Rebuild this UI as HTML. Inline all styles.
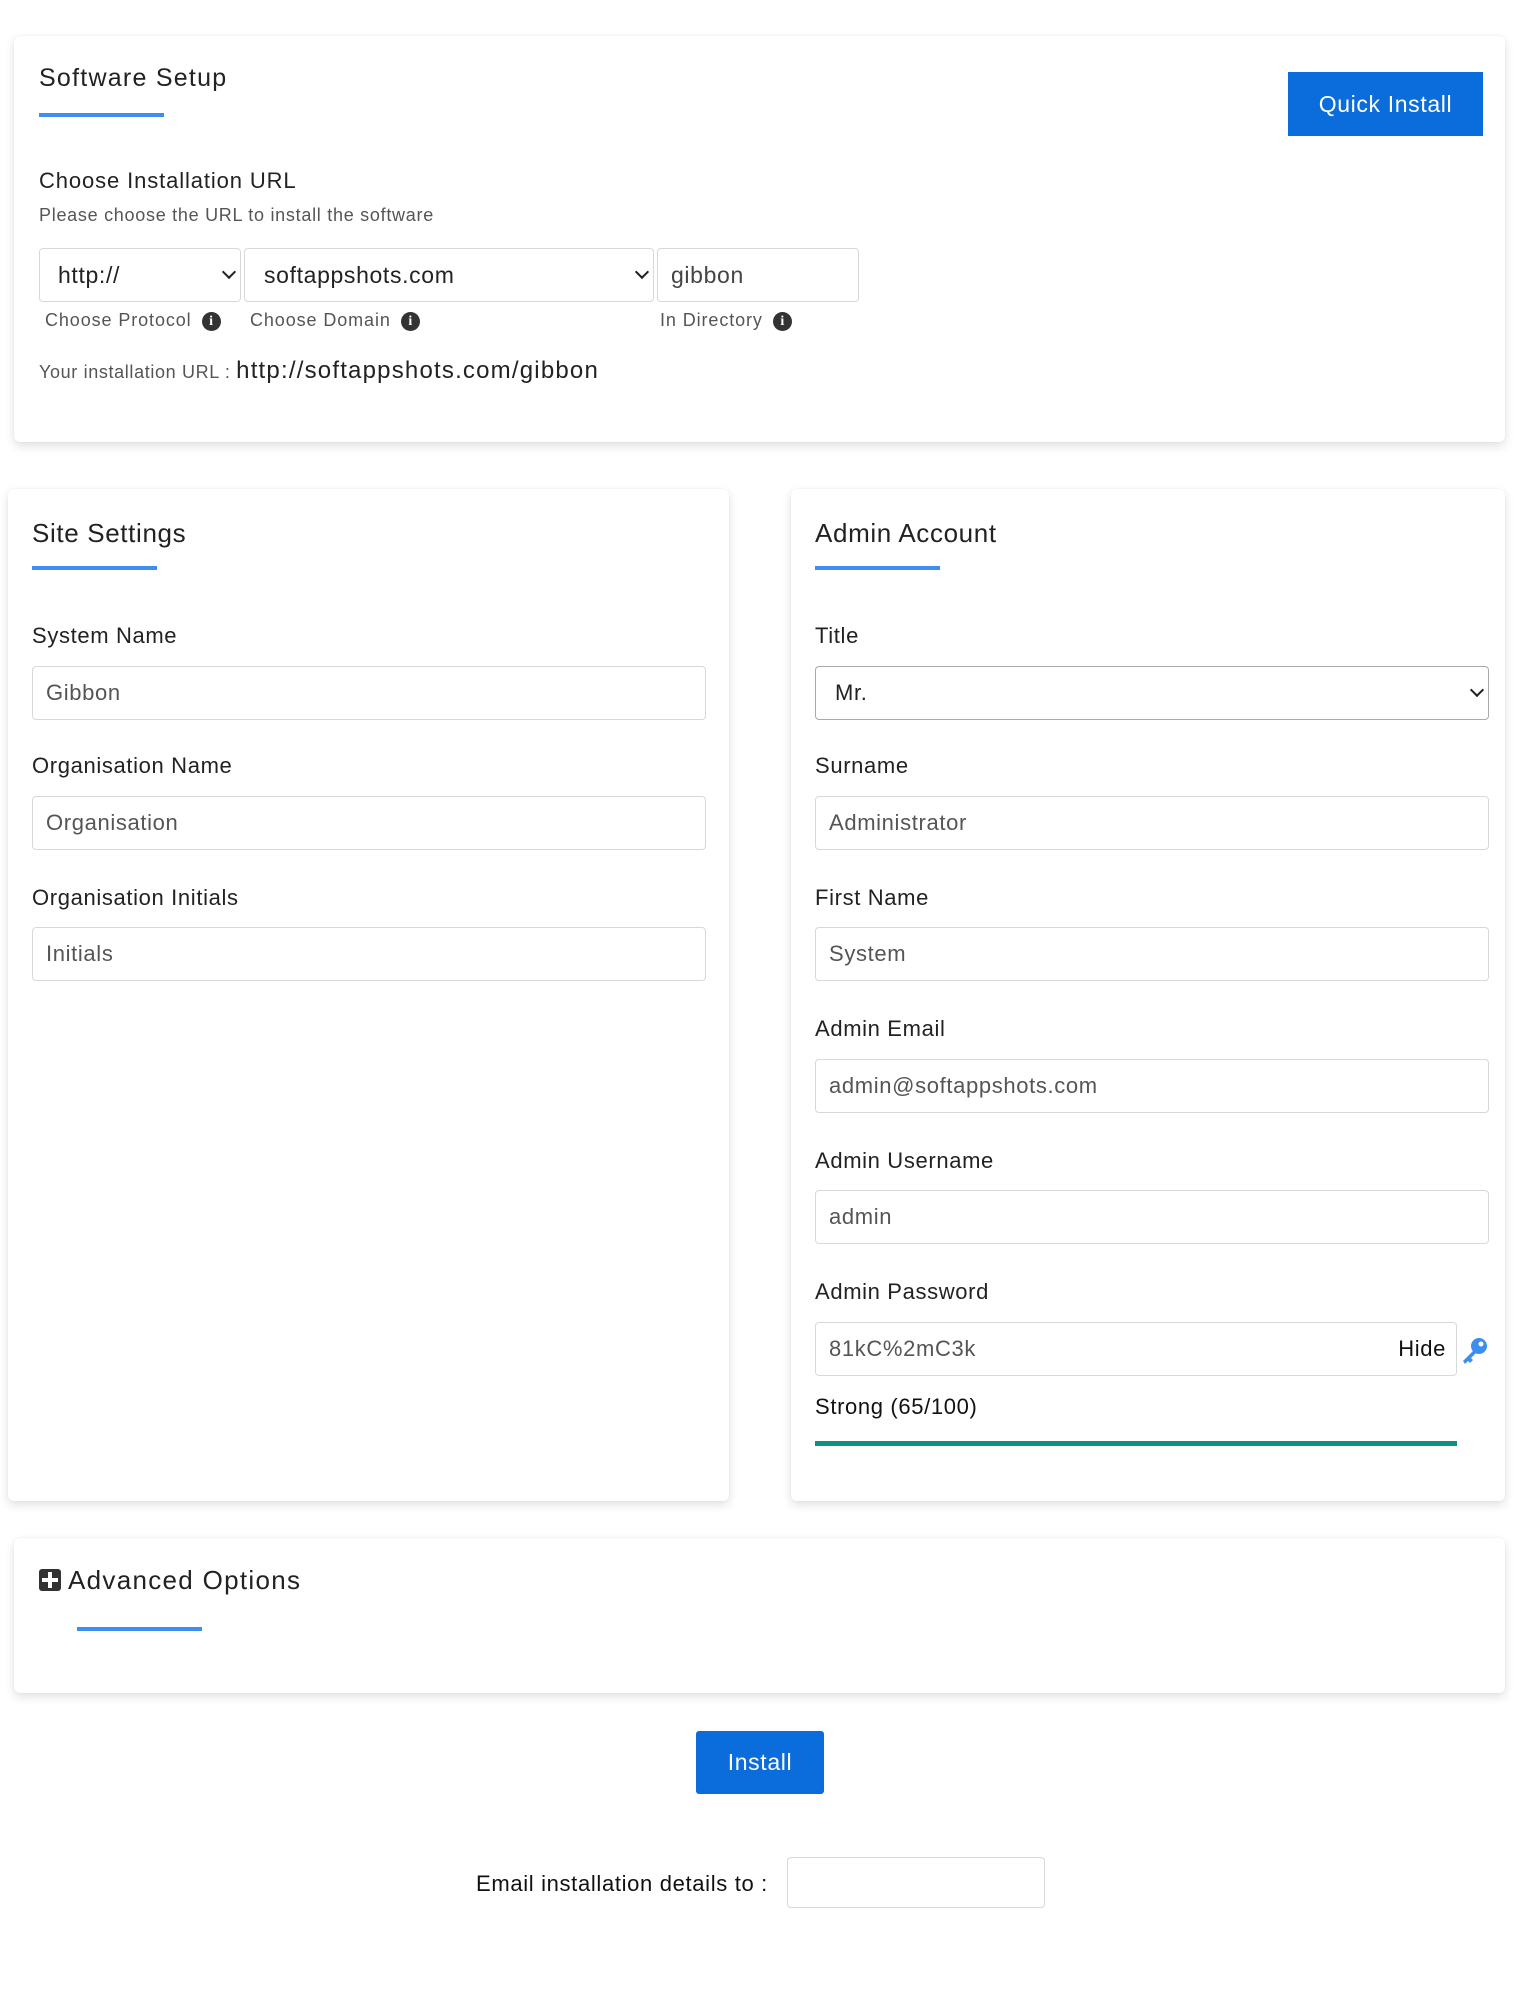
<!DOCTYPE html>
<html><head><meta charset="utf-8"><style>
*{box-sizing:border-box;margin:0;padding:0}
body{width:1522px;height:2000px;background:#fff;font-family:"Liberation Sans",sans-serif;color:#222;position:relative;overflow:hidden;letter-spacing:0.04em}
.a{position:absolute;white-space:nowrap}
.card{position:absolute;background:#fff;border-radius:6px;box-shadow:0 4px 10px rgba(0,0,0,.12),0 0 2px rgba(0,0,0,.06)}
.ul{position:absolute;height:4px;background:#3d8ef0;width:125px}
.inp{position:absolute;border:1.5px solid #d8d8d8;border-radius:4px;background:#fff;font-size:22px;color:#555;padding-left:13px;display:flex;align-items:center}
.lbl{position:absolute;font-size:22px;color:#222;white-space:nowrap}
.h{position:absolute;font-size:26px;color:#222;white-space:nowrap}
.chev{position:absolute;right:6px;top:50%;width:10px;height:10px;margin-top:-8px;border-right:2.5px solid #222;border-bottom:2.5px solid #222;transform:rotate(45deg)}
.info{display:inline-block;width:19px;height:19px;border-radius:50%;background:#333;color:#fff;font-size:14px;font-weight:bold;text-align:center;line-height:19px;font-family:"Liberation Serif",serif;vertical-align:middle;margin-left:10px;letter-spacing:0}
.sm{font-size:18px;color:#555}
</style></head><body>

<div class="card" style="left:14px;top:36px;width:1491px;height:406px"></div>
<div class="h" style="left:39px;top:64px;font-size:25px;letter-spacing:0.05em">Software Setup</div>
<div class="ul" style="left:39px;top:113px"></div>
<div class="a" style="left:1288px;top:72px;width:195px;height:64px;background:#0a6ddb;color:#fff;font-size:23px;display:flex;align-items:center;justify-content:center">Quick Install</div>
<div class="a" style="left:39px;top:168px;font-size:22px;letter-spacing:0.04em">Choose Installation URL</div>
<div class="a sm" style="left:39px;top:205px;letter-spacing:0.04em">Please choose the URL to install the software</div>
<div class="inp" style="left:39px;top:248px;width:202px;height:54px;padding-left:18px;font-size:23px;color:#222">http://<span class="chev"></span></div>
<div class="inp" style="left:244px;top:248px;width:410px;height:54px;padding-left:19px;font-size:23px;color:#222">softappshots.com<span class="chev"></span></div>
<div class="inp" style="left:657px;top:248px;width:202px;height:54px;font-size:23px;color:#444">gibbon</div>
<div class="a sm" style="left:45px;top:310px;letter-spacing:0.05em">Choose Protocol<span class="info">i</span></div>
<div class="a sm" style="left:250px;top:310px;letter-spacing:0.05em">Choose Domain<span class="info">i</span></div>
<div class="a sm" style="left:660px;top:310px;letter-spacing:0.05em">In Directory<span class="info">i</span></div>
<div class="a" style="left:39px;top:357px"><span class="sm">Your installation URL : </span><span style="font-size:24px;color:#222;letter-spacing:0.05em">http://softappshots.com/gibbon</span></div>

<div class="card" style="left:8px;top:489px;width:721px;height:1012px"></div>
<div class="card" style="left:791px;top:489px;width:714px;height:1012px"></div>

<div class="h" style="left:32px;top:518px">Site Settings</div>
<div class="ul" style="left:32px;top:566px"></div>
<div class="lbl" style="left:32px;top:623px">System Name</div>
<div class="inp" style="left:32px;top:666px;width:674px;height:54px">Gibbon</div>
<div class="lbl" style="left:32px;top:753px">Organisation Name</div>
<div class="inp" style="left:32px;top:796px;width:674px;height:54px">Organisation</div>
<div class="lbl" style="left:32px;top:885px">Organisation Initials</div>
<div class="inp" style="left:32px;top:927px;width:674px;height:54px">Initials</div>

<div class="h" style="left:815px;top:518px">Admin Account</div>
<div class="ul" style="left:815px;top:566px"></div>
<div class="lbl" style="left:815px;top:623px">Title</div>
<div class="inp" style="left:815px;top:666px;width:674px;height:54px;border-color:#aaa;color:#222;padding-left:19px">Mr.<span class="chev"></span></div>
<div class="lbl" style="left:815px;top:753px">Surname</div>
<div class="inp" style="left:815px;top:796px;width:674px;height:54px">Administrator</div>
<div class="lbl" style="left:815px;top:885px">First Name</div>
<div class="inp" style="left:815px;top:927px;width:674px;height:54px">System</div>
<div class="lbl" style="left:815px;top:1016px">Admin Email</div>
<div class="inp" style="left:815px;top:1059px;width:674px;height:54px">admin@softappshots.com</div>
<div class="lbl" style="left:815px;top:1148px">Admin Username</div>
<div class="inp" style="left:815px;top:1190px;width:674px;height:54px">admin</div>
<div class="lbl" style="left:815px;top:1279px">Admin Password</div>
<div class="inp" style="left:815px;top:1322px;width:642px;height:54px">81kC%2mC3k<span style="position:absolute;right:10px;color:#111">Hide</span></div>
<svg class="a" style="left:1460px;top:1336px" width="30" height="30" viewBox="0 0 30 30"><circle cx="19" cy="10" r="8" fill="#3d8ef0"/><circle cx="21" cy="8" r="2.5" fill="#fff"/><path d="M14 14 L3 25 L5 28 L8 25 L10 27 L13 24 L11 22 L17 16Z" fill="#3d8ef0"/></svg>
<div class="lbl" style="left:815px;top:1394px;color:#111">Strong (65/100)</div>
<div class="a" style="left:815px;top:1441px;width:642px;height:5px;background:#0f917f"></div>

<div class="card" style="left:14px;top:1538px;width:1491px;height:155px"></div>
<div class="a" style="left:39px;top:1569px;width:22px;height:22px;background:#333;border-radius:3px"></div>
<div class="a" style="left:42px;top:1578px;width:16px;height:4px;background:#fff"></div>
<div class="a" style="left:48px;top:1572px;width:4px;height:16px;background:#fff"></div>
<div class="h" style="left:68px;top:1565px;letter-spacing:0.05em">Advanced Options</div>
<div class="ul" style="left:77px;top:1627px"></div>

<div class="a" style="left:696px;top:1731px;width:128px;height:63px;background:#0a6ddb;color:#fff;font-size:23px;border-radius:3px;display:flex;align-items:center;justify-content:center">Install</div>
<div class="a" style="left:476px;top:1871px;font-size:22px;color:#111;letter-spacing:0.03em">Email installation details to :</div>
<div class="inp" style="left:787px;top:1857px;width:258px;height:51px"></div>
</body></html>
